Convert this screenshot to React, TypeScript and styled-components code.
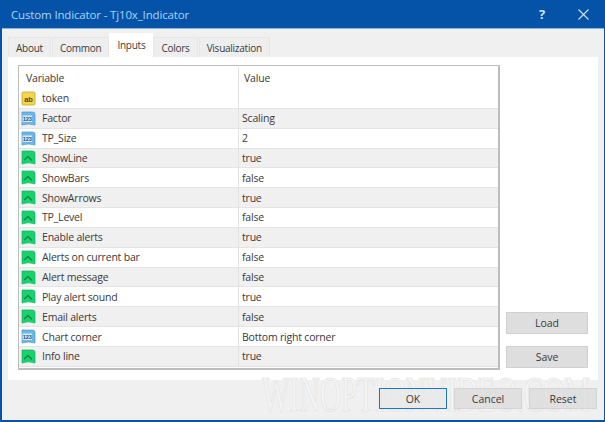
import React from "react";
import styled, { createGlobalStyle } from "styled-components";

const Global = createGlobalStyle`
  html, body { margin: 0; padding: 0; background: #0553a8; }
  body { font-family: "Open Sans", "Liberation Sans", sans-serif; }
`;

const Window = styled.div`
  width: 605px; height: 422px; box-sizing: border-box;
  display: flex; flex-direction: column;
  background: #0553a8; overflow: hidden;
  padding: 0 1px 2px 2px;
`;
const TitleBar = styled.div`
  height: 28px; flex: none; display: flex; align-items: center;
  padding: 0 15px 0 9px; color: #a9d3f2;
  font-size: 11.5px; letter-spacing: -0.15px;
`;
const Title = styled.span`flex: 1;`;
const Help = styled.span`
  color: #cfe3f5; font-weight: 700; font-size: 13px; margin-right: 33px;
`;
const Body = styled.div`
  position: relative; flex: 1; background: #f0f0f0; display: flex; flex-direction: column;
  border-top: 1px solid #8ab4dc; padding: 0 6px 0 6px;
`;
const Tabs = styled.div`
  height: 28px; flex: none; display: flex; align-items: flex-end; gap: 1px;
`;
const Tab = styled.div<{ $active?: boolean }>`
  height: ${p => (p.$active ? 24 : 20)}px; padding: 0 ${p => (p.$active ? 8 : 7)}px;
  margin: 0 ${p => (p.$active ? -1 : 0)}px; box-sizing: border-box;
  display: flex; align-items: center; background: ${p => (p.$active ? "#fff" : "#eeeeee")};
  ${p => !p.$active && "border: 1px solid #e6e6e6; border-bottom: none;"}
  font-size: 10px; letter-spacing: -0.25px; color: #3a3a3a; z-index: ${p => (p.$active ? 1 : 0)};
`;
const Panel = styled.div`
  height: 323px; flex: none; box-sizing: border-box; background: #fff; padding: 8px 10px 10px 10px;
  display: flex; gap: 6px;
`;
const Table = styled.div`
  width: 482px; height: 305px; box-sizing: border-box; flex: none;
  border: 1px solid #bdbdbd; border-right-width: 2px; border-bottom-width: 2px; display: flex; flex-direction: column;
`;
const Row = styled.div<{ $alt?: boolean; $header?: boolean }>`
  height: ${p => (p.$header ? 23 : 19.85)}px; flex: none; box-sizing: border-box;
  display: grid; grid-template-columns: 220px 1fr;
  background: ${p => (p.$alt ? "#f0f0f0" : "#fff")};
  ${p => (p.$header ? "padding-top: 1px;" : "border-bottom: 1px solid #e4e4e4;")}
  font-size: 10.5px; letter-spacing: -0.2px; color: #3a3a3a;
`;
const NameCell = styled.div<{ $header?: boolean }>`
  display: flex; align-items: center; gap: 6px; padding-left: ${p => (p.$header ? 7 : 2)}px;
  border-right: 1px solid #e2e2e2;
`;
const ValueCell = styled.div<{ $header?: boolean }>`
  display: flex; align-items: center; padding-left: ${p => (p.$header ? 5 : 3)}px;
`;
const Side = styled.div`
  flex: 1; display: flex; flex-direction: column; align-items: center; gap: 12px; padding-top: 247px;
`;
const Btn = styled.div`
  box-sizing: border-box; background: #dedede; border: 1px solid #d0d0d0; color: #3a3a3a;
  display: flex; align-items: center; justify-content: center; font-size: 10.5px;
  width: 82px; height: 22px; flex: none;
`;
const Footer = styled.div`
  flex: 1; display: flex; justify-content: flex-end; align-items: flex-start; gap: 7px;
  padding: 8px 1px 0 0;
`;
const FootBtn = styled(Btn)<{ $primary?: boolean }>`
  width: 68px; height: 21px; position: relative; z-index: 1;
  background: ${p => (p.$primary ? "rgba(232,232,232,0.75)" : "rgba(220,220,220,0.8)")};
  border: ${p => (p.$primary ? "1.5px solid #1a79c4" : "1px solid #d4d4d4")};
`;
const Watermark = styled.div`
  position: absolute; left: 260px; bottom: 4px;
  font-family: "Liberation Serif", serif; font-size: 50px; line-height: 44px; white-space: nowrap;
  transform: scaleX(0.58); transform-origin: left bottom;
  color: #f5f5f5; -webkit-text-stroke: 0.7px #dedede;
`;

type Kind = "ab" | "num" | "bool";

const Icon = ({ kind }: { kind: Kind }) => {
  if (kind === "ab") {
    return (
      <svg width="15" height="15" viewBox="0 0 15 15">
        <path d="M1 2.5 Q1 1 2.5 1 H12.5 Q14 1 14 2.5 V13 Q14 14 12.5 14 H2.5 Q1 14 1 13Z" fill="#f3d64f" stroke="#c9a227" strokeWidth="0.8" />
        <text x="7.5" y="10.5" fontSize="7.5" fontWeight="700" textAnchor="middle" fill="#5b4a10" fontFamily="Liberation Sans, sans-serif">ab</text>
      </svg>
    );
  }
  if (kind === "num") {
    return (
      <svg width="15" height="15" viewBox="0 0 15 15">
        <path d="M1 1 H11.5 Q14 1 14 3.5 V14 Q7.5 12 1 14Z" fill="#6cb6ea" stroke="#4b93cd" strokeWidth="0.7" />
        <rect x="1.5" y="4.5" width="9.5" height="6.5" fill="#d4eafa" />
        <text x="6.2" y="10" fontSize="5.6" fontWeight="700" textAnchor="middle" fill="#174f86" fontFamily="Liberation Sans, sans-serif">123</text>
      </svg>
    );
  }
  return (
    <svg width="15" height="15" viewBox="0 0 15 15">
      <path d="M1 1 H11.5 Q14 1 14 3.5 V14 Q7.5 11.5 1 14Z" fill="#18d26e" stroke="#10b35c" strokeWidth="0.7" />
      <path d="M3 10 L7 6.5 L11 10.5" fill="none" stroke="#0b7f45" strokeWidth="1.2" />
    </svg>
  );
};

const rows: { kind: Kind; name: string; value: string }[] = [
  { kind: "ab", name: "token", value: "" },
  { kind: "num", name: "Factor", value: "Scaling" },
  { kind: "num", name: "TP_Size", value: "2" },
  { kind: "bool", name: "ShowLine", value: "true" },
  { kind: "bool", name: "ShowBars", value: "false" },
  { kind: "bool", name: "ShowArrows", value: "true" },
  { kind: "bool", name: "TP_Level", value: "false" },
  { kind: "bool", name: "Enable alerts", value: "true" },
  { kind: "bool", name: "Alerts on current bar", value: "false" },
  { kind: "bool", name: "Alert message", value: "false" },
  { kind: "bool", name: "Play alert sound", value: "true" },
  { kind: "bool", name: "Email alerts", value: "false" },
  { kind: "num", name: "Chart corner", value: "Bottom right corner" },
  { kind: "bool", name: "Info line", value: "true" },
];

export default function App() {
  return (
    <Window>
      <Global />
      <TitleBar>
        <Title>Custom Indicator - Tj10x_Indicator</Title>
        <Help>?</Help>
        <svg width="11" height="11" viewBox="0 0 11 11">
          <path d="M0.5 0.5 L10.5 10.5 M10.5 0.5 L0.5 10.5" stroke="#cfe3f5" strokeWidth="1.1" />
        </svg>
      </TitleBar>
      <Body>
        <Tabs>
          <Tab>About</Tab>
          <Tab>Common</Tab>
          <Tab $active>Inputs</Tab>
          <Tab>Colors</Tab>
          <Tab>Visualization</Tab>
        </Tabs>
        <Panel>
          <Table>
            <Row $header>
              <NameCell $header>Variable</NameCell>
              <ValueCell $header>Value</ValueCell>
            </Row>
            {rows.map((r, i) => (
              <Row key={r.name} $alt={i % 2 === 1}>
                <NameCell>
                  <Icon kind={r.kind} />
                  {r.name}
                </NameCell>
                <ValueCell>{r.value}</ValueCell>
              </Row>
            ))}
          </Table>
          <Side>
            <Btn>Load</Btn>
            <Btn>Save</Btn>
          </Side>
        </Panel>
        <Watermark>WINOPTIONVIDEO.COM</Watermark>
        <Footer>
          <FootBtn $primary>OK</FootBtn>
          <FootBtn>Cancel</FootBtn>
          <FootBtn>Reset</FootBtn>
        </Footer>
      </Body>
    </Window>
  );
}
